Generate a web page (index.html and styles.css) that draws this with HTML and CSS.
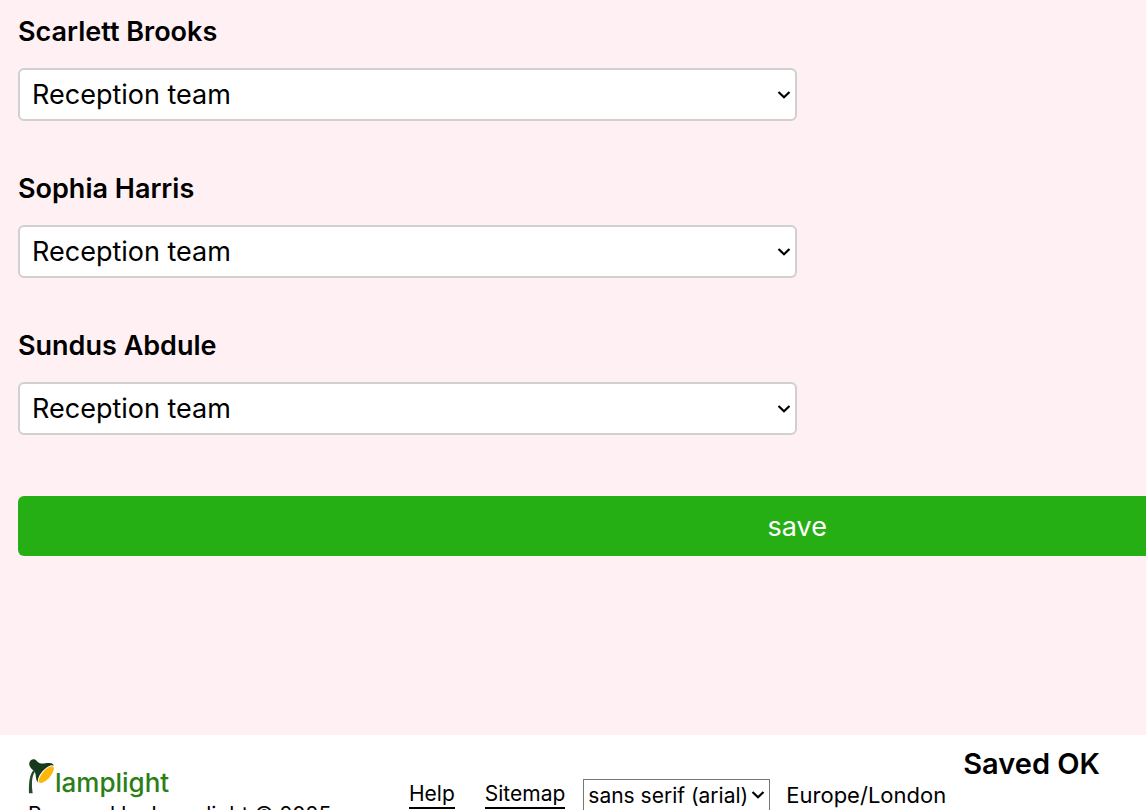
FILE: index.html
```html
<!DOCTYPE html>
<html lang="en">
<head>
<meta charset="utf-8">
<title>Teams</title>
<link rel="stylesheet" href="styles.css">
</head>
<body>
<form class="team-form">
  <div class="field">
    <label class="field-label" for="scarlett">Scarlett Brooks</label>
    <select class="field-select" id="scarlett"><option>Reception team</option></select>
  </div>
  <div class="field">
    <label class="field-label" for="sophia">Sophia Harris</label>
    <select class="field-select" id="sophia"><option>Reception team</option></select>
  </div>
  <div class="field">
    <label class="field-label" for="sundus">Sundus Abdule</label>
    <select class="field-select" id="sundus"><option>Reception team</option></select>
  </div>
  <button class="save" type="button">save</button>
</form>
<footer class="footer">
  <div class="brand">
    <div class="logo">
      <svg class="lamp" viewBox="84 71 78 108" width="26" height="36" aria-hidden="true">
        <path d="M100 105C89 118 86 142 87 174H98C95 150 94 126 104 111z" fill="#254a2c"/>
        <path d="M88 89C86 78 94 71 103 72C110 74 112 82 120 84C132 87 142 80 153 84C158 85 161 88 161 93L118 143C109 139 108 130 107 118C106 106 92 103 88 89z" fill="#173a1c"/>
        <ellipse cx="139" cy="118" rx="33" ry="14" transform="rotate(-49 139 118)" fill="#ffb80a" stroke="#fff" stroke-width="3"/>
      </svg>
      <span class="logo-name">lamplight</span>
    </div>
    <p class="powered">Powered by Lamplight © 2025</p>
  </div>
  <nav class="links">
    <a class="link" href="#help">Help</a>
    <a class="link" href="#sitemap">Sitemap</a>
    <select class="font-select" aria-label="Font"><option>sans serif (arial)</option></select>
    <span class="zone">Europe/London</span>
  </nav>
  <strong class="status" role="status">Saved OK</strong>
</footer>
</body>
</html>
```
FILE: styles.css
```css
* { box-sizing: border-box; }
html { overflow-x: hidden; scrollbar-width: none; }
body {
  margin: 0;
  background: #fff;
  color: #000;
  font-family: Inter, "Liberation Sans", sans-serif;
  font-size: 27px;
}
.team-form {
  padding: 14px 0 179px 18px;
  background: #fff0f3;
  overflow: hidden;
}
.field { width: 68vw; margin-bottom: 50px; }
.field-label {
  display: block;
  margin-bottom: 18px;
  line-height: 36px;
  font-weight: 600;
}
.field-select,
.font-select {
  appearance: none;
  background: #fff url("data:image/svg+xml,%3Csvg xmlns='http://www.w3.org/2000/svg' width='14' height='8' viewBox='0 0 14 8'%3E%3Cpath d='M1.500 1 7 6.200 12.500 1' fill='none' stroke='%23000' stroke-width='2.200'/%3E%3C/svg%3E") no-repeat right 4px center;
  color: #000;
  font: inherit;
}
.field-select {
  display: block;
  width: 100%;
  height: 53px;
  padding: 0 24px 0 12px;
  border: 2px solid #d0d0d0;
  border-radius: 6px;
}
.save {
  display: block;
  width: 136vw;
  height: 60px;
  margin-top: 61px;
  border: 0;
  border-radius: 6px;
  background: #26af14;
  color: #fff;
  font: inherit;
}
.footer {
  position: relative;
  display: flex;
  align-items: flex-start;
  padding: 24px 28px 0;
  font-size: 21px;
}
.brand { width: 381px; }
.logo { display: flex; gap: 1px; height: 40px; }
.logo-name {
  color: #2a7f17;
  font-size: 26px;
  font-weight: 500;
  line-height: 48px;
}
.powered { margin: 0; line-height: 32px; white-space: nowrap; }
.links { display: flex; align-items: center; padding-top: 20px; white-space: nowrap; }
.link {
  margin-right: 30px;
  border-bottom: 2px solid #000;
  color: inherit;
  line-height: 26px;
  text-decoration: none;
}
.link + .font-select { margin-left: -12px; }
.font-select {
  height: 32px;
  margin-right: 16px;
  padding: 0 21px 0 4px;
  border: 1px solid #767676;
  border-radius: 0;
}
.zone { font-size: 22px; }
.status {
  position: absolute;
  top: 10px;
  right: 46px;
  font-size: 29px;
  font-weight: 600;
  line-height: 38px;
}
```
